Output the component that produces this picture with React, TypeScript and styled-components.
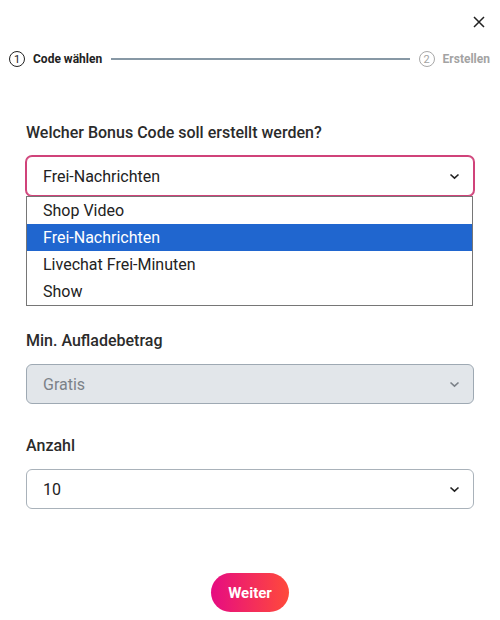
import React, { useState } from "react";
import styled, { createGlobalStyle } from "styled-components";

const GlobalStyle = createGlobalStyle`
  html, body {
    margin: 0;
    padding: 0;
    background: #ffffff;
    font-family: Roboto, "Liberation Sans", Arial, sans-serif;
    color: #222;
  }
`;

const Page = styled.div`
  width: 500px;
  height: 620px;
  box-sizing: border-box;
  display: flex;
  flex-direction: column;
  background: #fff;
`;

const TopBar = styled.div`
  display: flex;
  justify-content: flex-end;
  padding: 15px 14px 0 0;
  height: 30px;
  box-sizing: border-box;
`;

const CloseButton = styled.button`
  border: none;
  background: none;
  padding: 0;
  width: 14px;
  height: 14px;
  cursor: pointer;
  display: flex;
  align-items: center;
  justify-content: center;
`;

const Stepper = styled.div`
  display: flex;
  align-items: center;
  padding: 0 10px 0 9px;
  margin-top: 21px;
  height: 16px;
`;

const Step = styled.div<{ $active?: boolean }>`
  display: flex;
  align-items: center;
  gap: 8px;
  font-size: 12px;
  font-weight: 700;
  color: ${(p) => (p.$active ? "#222" : "#a3a3a3")};
  white-space: nowrap;
`;

const StepNum = styled.span<{ $active?: boolean }>`
  width: 14px;
  height: 14px;
  border-radius: 50%;
  border: 1px solid ${(p) => (p.$active ? "#222" : "#a8a8a8")};
  display: flex;
  align-items: center;
  justify-content: center;
  font-size: 11px;
  font-weight: 400;
  line-height: 1;
`;

const StepLine = styled.div`
  flex: 1;
  height: 2px;
  background: #8798a5;
  margin: 0 9px 0 9px;
`;

const Form = styled.div`
  display: flex;
  flex-direction: column;
  padding: 0 26px;
  margin-top: 57px;
`;

const Field = styled.div<{ $gap: number }>`
  display: flex;
  flex-direction: column;
  position: relative;
  margin-bottom: ${(p) => p.$gap}px;
`;

const Label = styled.label`
  font-size: 16px;
  font-weight: 500;
  line-height: 18px;
  color: #2b2b2b;
  margin-bottom: 14px;
`;

const SelectBox = styled.div<{ $focused?: boolean; $disabled?: boolean }>`
  height: 40px;
  box-sizing: border-box;
  border-radius: 6px;
  border: 1px solid
    ${(p) => (p.$focused ? "#d0437a" : p.$disabled ? "#9ea9b3" : "#a9b2ba")};
  box-shadow: ${(p) => (p.$focused ? "0 0 0 1px #d0437a" : "none")};
  background: ${(p) => (p.$disabled ? "#e2e6ea" : "#fff")};
  color: ${(p) => (p.$disabled ? "#7b8188" : "#222")};
  display: flex;
  align-items: center;
  justify-content: space-between;
  padding: 0 13px 0 16px;
  font-size: 16px;
`;

const OptionList = styled.ul`
  position: absolute;
  top: 72px;
  left: 0;
  right: 1px;
  margin: 0;
  padding: 0;
  list-style: none;
  background: #fff;
  border: 1px solid #767676;
  z-index: 2;
`;

const Option = styled.li<{ $selected?: boolean }>`
  height: 27px;
  line-height: 27px;
  padding-left: 16px;
  font-size: 16px;
  background: ${(p) => (p.$selected ? "#2066cf" : "#fff")};
  color: ${(p) => (p.$selected ? "#fff" : "#222")};
`;

const Footer = styled.div`
  display: flex;
  justify-content: center;
  margin-top: 64px;
`;

const PrimaryButton = styled.button`
  width: 78px;
  height: 39px;
  border: none;
  border-radius: 20px;
  background: linear-gradient(90deg, #e60c82 0%, #ff4a3a 100%);
  color: #fff;
  font-family: Roboto, "Liberation Sans", Arial, sans-serif;
  font-size: 15px;
  font-weight: 700;
  cursor: pointer;
`;

const Chevron = ({ color = "#222" }: { color?: string }) => (
  <svg width="11" height="7" viewBox="0 0 11 7" fill="none">
    <path d="M1.5 1.5 L5.5 5.2 L9.5 1.5" stroke={color} strokeWidth="1.6" />
  </svg>
);

const bonusOptions = ["Shop Video", "Frei-Nachrichten", "Livechat Frei-Minuten", "Show"];

export default function App() {
  const [bonus, setBonus] = useState("Frei-Nachrichten");

  return (
    <Page>
      <GlobalStyle />
      <TopBar>
        <CloseButton aria-label="Schließen">
          <svg width="12" height="12" viewBox="0 0 12 12">
            <path d="M1 1 L11 11 M11 1 L1 11" stroke="#222" strokeWidth="1.5" />
          </svg>
        </CloseButton>
      </TopBar>

      <Stepper>
        <Step $active>
          <StepNum $active>1</StepNum>
          Code wählen
        </Step>
        <StepLine />
        <Step>
          <StepNum>2</StepNum>
          Erstellen
        </Step>
      </Stepper>

      <Form>
        <Field $gap={136}>
          <Label>Welcher Bonus Code soll erstellt werden?</Label>
          <SelectBox $focused>
            {bonus}
            <Chevron />
          </SelectBox>
          <OptionList>
            {bonusOptions.map((o) => (
              <Option key={o} $selected={o === bonus} onClick={() => setBonus(o)}>
                {o}
              </Option>
            ))}
          </OptionList>
        </Field>

        <Field $gap={33}>
          <Label>Min. Aufladebetrag</Label>
          <SelectBox $disabled>
            Gratis
            <Chevron color="#7b8188" />
          </SelectBox>
        </Field>

        <Field $gap={0}>
          <Label>Anzahl</Label>
          <SelectBox>
            10
            <Chevron />
          </SelectBox>
        </Field>
      </Form>

      <Footer>
        <PrimaryButton>Weiter</PrimaryButton>
      </Footer>
    </Page>
  );
}
